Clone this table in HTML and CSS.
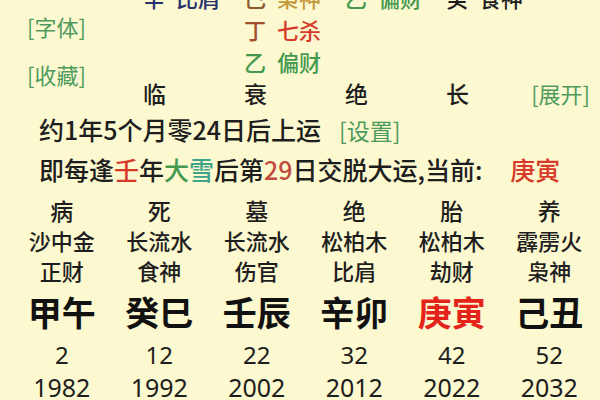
FILE: index.html
```html
<!DOCTYPE html>
<html lang="zh-CN">
<head>
<meta charset="utf-8">
<title>大运</title>
<link rel="stylesheet" href="styles.css">
</head>
<body>
<div class="page">
  <section class="top">
    <div class="labels">
      <span class="link">[字体]</span>
      <span class="link">[收藏]</span>
    </div>
    <div class="pillars">
      <div class="pillar">
        <div class="hidden">
          <div class="hid"><span class="navy">辛</span><span class="god navy">比肩</span></div>
        </div>
        <div class="state">临</div>
      </div>
      <div class="pillar">
        <div class="hidden">
          <div class="hid"><span class="brown">己</span><span class="god ochre">枭神</span></div>
          <div class="hid"><span class="rust">丁</span><span class="god red">七杀</span></div>
          <div class="hid"><span class="green">乙</span><span class="god green">偏财</span></div>
        </div>
        <div class="state">衰</div>
      </div>
      <div class="pillar">
        <div class="hidden">
          <div class="hid"><span class="green">乙</span><span class="god green">偏财</span></div>
        </div>
        <div class="state">绝</div>
      </div>
      <div class="pillar">
        <div class="hidden">
          <div class="hid"><span>癸</span><span class="god">食神</span></div>
        </div>
        <div class="state">长</div>
      </div>
    </div>
    <span class="link expand">[展开]</span>
  </section>

  <p class="line">约1年5个月零24日后上运<span class="link set">[设置]</span></p>
  <p class="line">即每逢<span class="red">壬</span>年<span class="green">大</span><span class="teal">雪</span>后第<span class="rust2">29</span>日交脱大运,当前: <span class="cur red">庚寅</span></p>

  <section class="luck">
    <div class="col">
      <div class="r-state">病</div><div class="r-nayin">沙中金</div><div class="r-god">正财</div>
      <div class="r-gz">甲午</div><div class="r-age">2</div><div class="r-year">1982</div>
    </div>
    <div class="col">
      <div class="r-state">死</div><div class="r-nayin">长流水</div><div class="r-god">食神</div>
      <div class="r-gz">癸巳</div><div class="r-age">12</div><div class="r-year">1992</div>
    </div>
    <div class="col">
      <div class="r-state">墓</div><div class="r-nayin">长流水</div><div class="r-god">伤官</div>
      <div class="r-gz">壬辰</div><div class="r-age">22</div><div class="r-year">2002</div>
    </div>
    <div class="col">
      <div class="r-state">绝</div><div class="r-nayin">松柏木</div><div class="r-god">比肩</div>
      <div class="r-gz">辛卯</div><div class="r-age">32</div><div class="r-year">2012</div>
    </div>
    <div class="col">
      <div class="r-state">胎</div><div class="r-nayin">松柏木</div><div class="r-god">劫财</div>
      <div class="r-gz current">庚寅</div><div class="r-age">42</div><div class="r-year">2022</div>
    </div>
    <div class="col">
      <div class="r-state">养</div><div class="r-nayin">霹雳火</div><div class="r-god">枭神</div>
      <div class="r-gz">己丑</div><div class="r-age">52</div><div class="r-year">2032</div>
    </div>
  </section>
</div>
</body>
</html>
```

FILE: styles.css
```css
html, body {
  margin: 0;
  padding: 0;
}
body {
  width: 600px;
  height: 400px;
  overflow: hidden;
  background: #fcf8cf;
  color: #1e1e1e;
  font-family: "Noto Sans CJK SC", "Noto Sans", sans-serif;
  font-weight: 500;
}
.page {
  width: 600px;
}

/* top area */
.top {
  display: flex;
  margin-top: -19px;
  padding: 0 10px 0 27px;
}
.labels {
  width: 116px;
  flex: none;
  display: flex;
  flex-direction: column;
  gap: 16px;
  padding-top: 29px;
}
.link {
  color: #4f9b5e;
  font-size: 22px;
  line-height: 32px;
  font-weight: 400;
}
.pillars {
  display: grid;
  grid-template-columns: 101px 101px 101px 80px;
}
.pillar {
  display: flex;
  flex-direction: column;
}
.hidden {
  flex: 1;
}
.hid {
  font-size: 22px;
  line-height: 32px;
  white-space: nowrap;
}
.god {
  margin-left: 11px;
}
.state {
  font-size: 23px;
  line-height: 32px;
}
.expand {
  align-self: flex-end;
  margin-left: auto;
}

/* colours */
.navy { color: #26316e; }
.brown { color: #8b5a2b; }
.ochre { color: #c59a3c; }
.rust { color: #a4502e; }
.red { color: #d83a2a; }
.green { color: #45994f; }
.teal { color: #3ea58a; }
.rust2 { color: #c24b3f; }

/* info lines */
.line {
  margin: 0;
  padding-left: 39px;
  font-size: 25px;
  line-height: 40px;
  white-space: nowrap;
}
.set {
  font-size: 23px;
  margin-left: 18px;
}
.cur {
  margin-left: 22px;
}

/* luck pillars table */
.luck {
  display: grid;
  grid-template-columns: repeat(6, 1fr);
  padding: 6px 2px 0 13px;
  text-align: center;
}
.col {
  display: flex;
  flex-direction: column;
}
.r-state {
  font-size: 23px;
  line-height: 30px;
}
.r-nayin,
.r-god {
  font-size: 22px;
  line-height: 30px;
}
.r-gz {
  font-size: 34px;
  font-weight: 700;
  line-height: 54px;
  color: #111;
}
.r-gz.current {
  color: #e4231b;
}
.r-age,
.r-year {
  font-family: "Noto Sans", "Noto Sans CJK SC", sans-serif;
  font-weight: 400;
}
.r-age {
  font-size: 24px;
  line-height: 32px;
}
.r-year {
  font-size: 25px;
  line-height: 33px;
}
```
